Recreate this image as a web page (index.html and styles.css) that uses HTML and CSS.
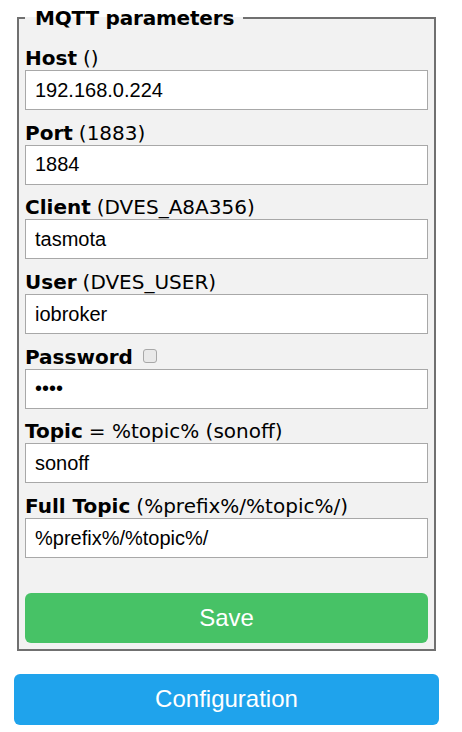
FILE: index.html
```html
<!DOCTYPE html>
<html lang="en">
<head>
<meta charset="utf-8">
<title>MQTT parameters</title>
<link rel="stylesheet" href="styles.css">
</head>
<body>
<div class="wrap">
  <fieldset class="box">
    <legend class="title">MQTT parameters</legend>
    <div class="form">
      <div class="field">
        <div class="label"><b>Host</b> ()</div>
        <input class="inp" type="text" value="192.168.0.224">
      </div>
      <div class="field">
        <div class="label"><b>Port</b> (1883)</div>
        <input class="inp" type="text" value="1884">
      </div>
      <div class="field">
        <div class="label"><b>Client</b> (DVES_A8A356)</div>
        <input class="inp" type="text" value="tasmota">
      </div>
      <div class="field">
        <div class="label"><b>User</b> (DVES_USER)</div>
        <input class="inp" type="text" value="iobroker">
      </div>
      <div class="field">
        <div class="label"><b>Password</b><input class="cb" type="checkbox"></div>
        <input class="inp" type="password" value="1234">
      </div>
      <div class="field">
        <div class="label"><b>Topic</b> = %topic% (sonoff)</div>
        <input class="inp" type="text" value="sonoff">
      </div>
      <div class="field">
        <div class="label"><b>Full Topic</b> (%prefix%/%topic%/)</div>
        <input class="inp" type="text" value="%prefix%/%topic%/">
      </div>
      <button class="btn save" type="button">Save</button>
    </div>
  </fieldset>
  <button class="btn conf" type="button">Configuration</button>
</div>
</body>
</html>
```

FILE: styles.css
```css
html, body {
  margin: 0;
  padding: 0;
  background: #ffffff;
}

body {
  font-family: "DejaVu Sans", Verdana, sans-serif;
  font-size: 20px;
  color: #000000;
}

.wrap {
  width: 425px;
  padding: 6px 0 0 14px;
  display: flex;
  flex-direction: column;
}

.box {
  margin: 0 3px;
  padding: 16px 6px 6px;
  border: 2px solid #707070;
  background: #f2f2f2;
  min-width: 0;
}

.title {
  padding: 0 9px 0 10px;
  font-weight: bold;
  font-size: 20px;
  line-height: 24px;
  letter-spacing: -0.2px;
}

.form {
  display: flex;
  flex-direction: column;
  gap: 10.7px;
}

.field {
  display: flex;
  flex-direction: column;
}

.label {
  line-height: 24px;
  white-space: nowrap;
  display: flex;
  align-items: center;
}

.label b {
  margin-right: 0.3em;
}

.cb {
  -webkit-appearance: none;
  appearance: none;
  width: 14px;
  height: 14px;
  margin: -2px 0 0 4px;
  border: 1px solid #a8a8a8;
  border-radius: 3px;
  background: #e9e9e9;
  box-sizing: border-box;
}

.inp {
  box-sizing: border-box;
  width: 100%;
  height: 40px;
  margin: 0;
  padding: 0 9px;
  border: 1px solid #a8a8a8;
  background: #ffffff;
  font-family: "Liberation Sans", Arial, sans-serif;
  font-size: 20px;
  color: #000000;
  outline: none;
}

.btn {
  display: block;
  width: 100%;
  border: 0;
  border-radius: 6px;
  color: #ffffff;
  font-family: "Liberation Sans", Arial, sans-serif;
  font-size: 24px;
  padding: 0;
}

.save {
  margin-top: 24px;
  height: 50px;
  background: #47c266;
}

.conf {
  margin-top: 23px;
  height: 51px;
  background: #1fa3ec;
}
```
